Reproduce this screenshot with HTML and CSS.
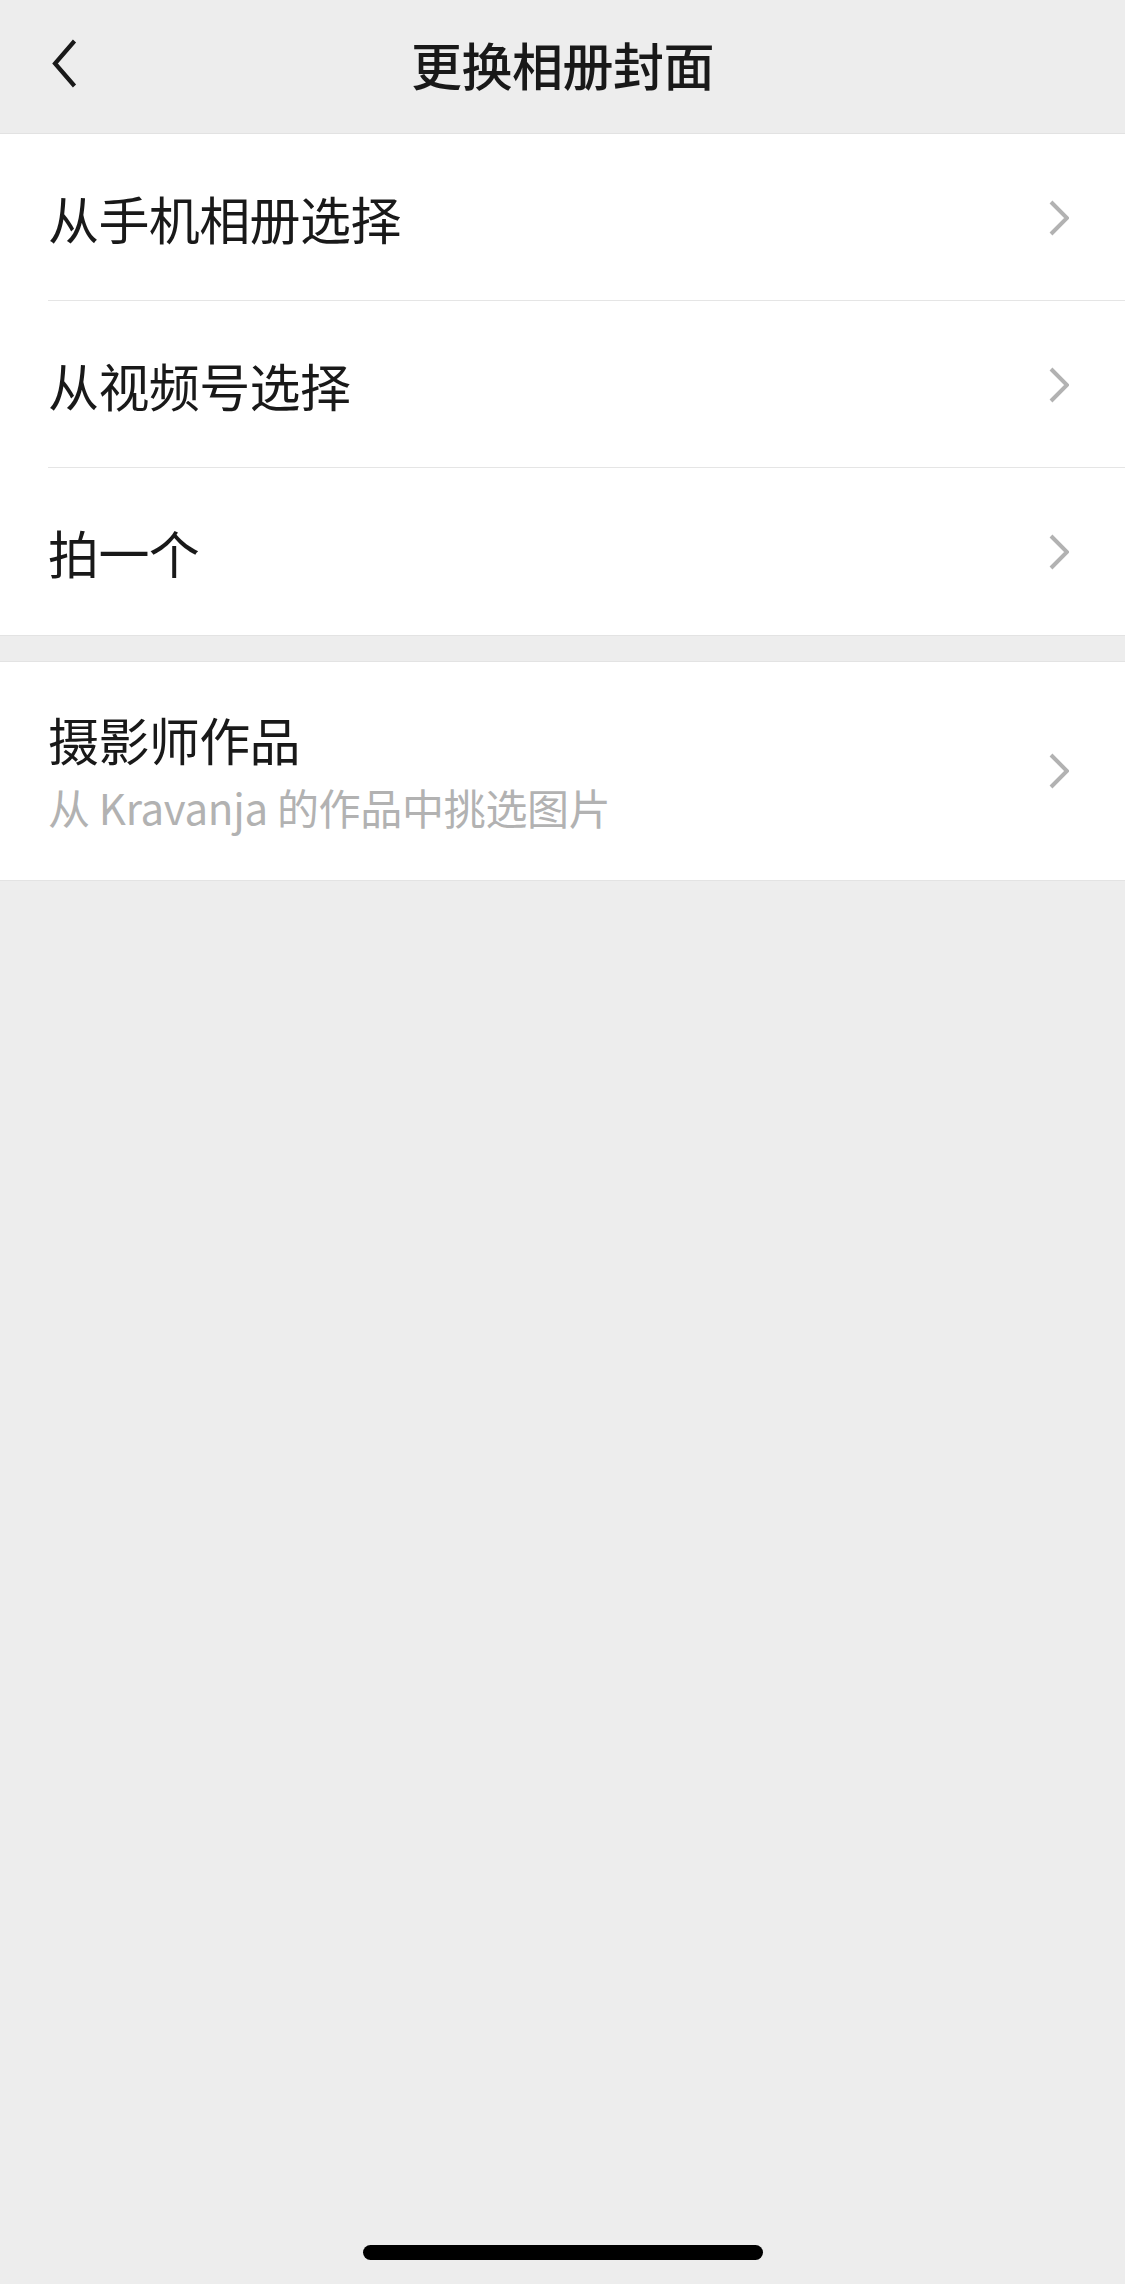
FILE: index.html
```html
<!DOCTYPE html>
<html lang="zh-CN">
<head>
<meta charset="utf-8">
<title>更换相册封面</title>
<link rel="stylesheet" href="styles.css">
</head>
<body>
<div class="screen">
  <header class="navbar">
    <div class="nav-left">
      <svg class="back" width="25" height="49" viewBox="0 0 25 49"><polyline points="22.5,2 3,24.5 22.5,47" fill="none" stroke="#191919" stroke-width="4.2" stroke-linecap="butt" stroke-linejoin="miter"/></svg>
    </div>
    <div class="nav-title">更换相册封面</div>
    <div class="nav-right"></div>
  </header>

  <section class="group">
    <div class="row">
      <span class="row-text">从手机相册选择</span>
      <svg class="chev" width="20" height="36" viewBox="0 0 20 36"><polyline points="2,2 18,18 2,34" fill="none" stroke="#b2b2b2" stroke-width="4"/></svg>
    </div>
    <div class="row">
      <span class="row-text">从视频号选择</span>
      <svg class="chev" width="20" height="36" viewBox="0 0 20 36"><polyline points="2,2 18,18 2,34" fill="none" stroke="#b2b2b2" stroke-width="4"/></svg>
    </div>
    <div class="row">
      <span class="row-text">拍一个</span>
      <svg class="chev" width="20" height="36" viewBox="0 0 20 36"><polyline points="2,2 18,18 2,34" fill="none" stroke="#b2b2b2" stroke-width="4"/></svg>
    </div>
  </section>

  <section class="group group-second">
    <div class="row row-tall">
      <div class="row-stack">
        <span class="row-text">摄影师作品</span>
        <span class="row-sub">从 Kravanja 的作品中挑选图片</span>
      </div>
      <svg class="chev" width="20" height="36" viewBox="0 0 20 36"><polyline points="2,2 18,18 2,34" fill="none" stroke="#b2b2b2" stroke-width="4"/></svg>
    </div>
  </section>

  <div class="spacer"></div>
  <div class="home-area"><div class="home-indicator"></div></div>
</div>
</body>
</html>
```

FILE: styles.css
```css
* { box-sizing: border-box; }
html, body {
  margin: 0;
  padding: 0;
  background: #ededed;
}
body {
  font-family: "Noto Sans CJK SC", "Noto Sans", sans-serif;
  color: #191919;
}
.screen {
  width: 1125px;
  height: 2284px;
  display: flex;
  flex-direction: column;
  background: #ededed;
}
.navbar {
  height: 134px;
  flex: none;
  display: grid;
  grid-template-columns: 1fr auto 1fr;
  align-items: center;
  background: #ededed;
  border-bottom: 1px solid #e2e2e2;
}
.nav-left {
  padding-left: 52px;
  display: flex;
  align-items: center;
  padding-bottom: 6px;
}
.back { display: block; }
.nav-title {
  font-size: 51px;
  font-weight: 500;
  line-height: 60px;
  letter-spacing: -0.5px;
  color: #191919;
  padding-bottom: 6px;
}
.group {
  background: #ffffff;
  border-bottom: 1px solid #e3e3e3;
  flex: none;
}
.group-second {
  margin-top: 25px;
  border-top: 1px solid #e3e3e3;
}
.row {
  height: 167px;
  display: flex;
  align-items: center;
  justify-content: space-between;
  padding: 0 56px 0 48px;
  position: relative;
}
.row + .row::before {
  content: "";
  position: absolute;
  top: -1px;
  left: 48px;
  right: 0;
  height: 1px;
  background: #e5e5e5;
}
.row-tall { height: 218px; }
.row-text {
  font-size: 51px;
  line-height: 60px;
  color: #191919;
  letter-spacing: -0.6px;
}
.row-stack {
  display: flex;
  flex-direction: column;
  gap: 12px;
}
.row-sub {
  font-size: 42px;
  line-height: 52px;
  color: #b2b2b2;
  letter-spacing: -0.3px;
}
.chev { display: block; flex: none; }
.spacer { flex: 1; }
.home-area {
  height: 39px;
  flex: none;
  display: flex;
  justify-content: center;
}
.home-indicator {
  width: 400px;
  height: 15px;
  border-radius: 8px;
  background: #000000;
}
```
